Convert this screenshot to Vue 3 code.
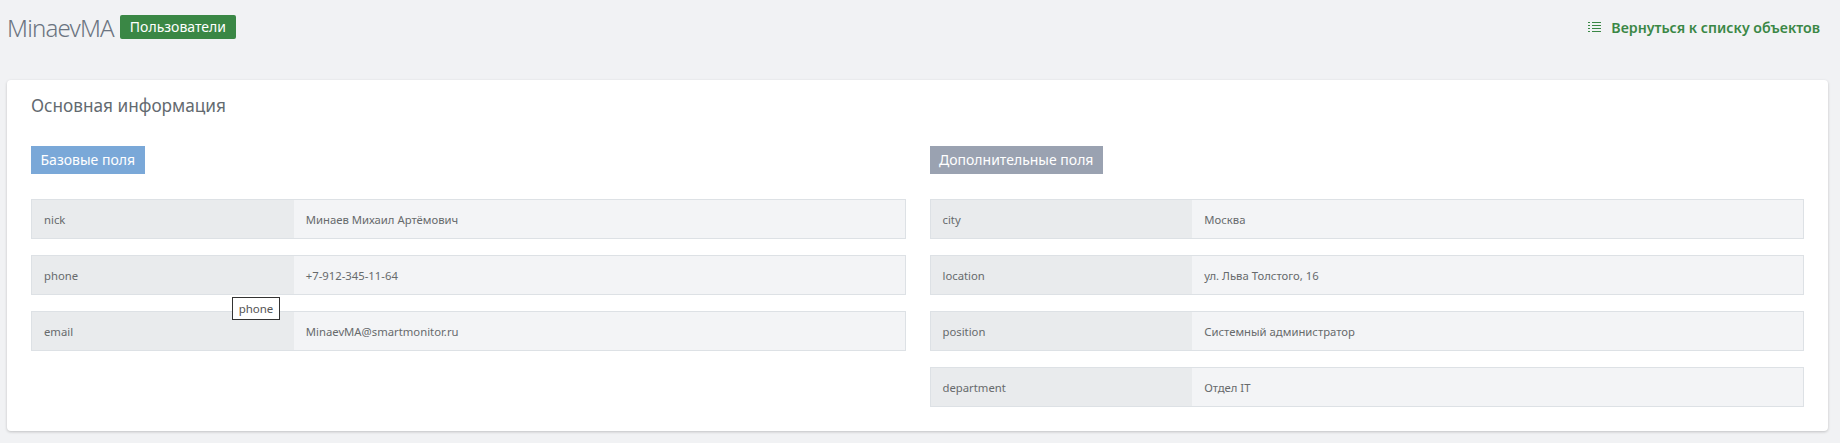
<template>
  <div class="page">
    <header class="top">
      <div class="heading">
        <h1 class="name">MinaevMA</h1>
        <span class="tag">Пользователи</span>
      </div>
      <a class="back">
        <svg class="back-icon" width="13" height="12" viewBox="0 0 13 12">
          <path d="M0 1.5h2M0 4.5h2M0 7.5h2M0 10.5h2" stroke="#3a8745" stroke-width="1" fill="none" />
          <path d="M4 1.5h9M4 4.5h9M4 7.5h9M4 10.5h9" stroke="#3a8745" stroke-width="1" fill="none" />
        </svg>
        Вернуться к списку объектов
      </a>
    </header>

    <section class="card">
      <h2 class="card-title">Основная информация</h2>
      <div class="columns">
        <div v-for="col in columns" :key="col.title" class="column">
          <div class="col-title" :class="col.cls">{{ col.title }}</div>
          <div class="rows">
            <div v-for="row in col.rows" :key="row[0]" class="row">
              <div class="label">{{ row[0] }}</div>
              <div class="value">{{ row[1] }}</div>
              <div v-if="row[0] === 'email'" class="tooltip">phone</div>
            </div>
          </div>
        </div>
      </div>
    </section>
  </div>
</template>

<script setup>
const columns = [
  {
    title: 'Базовые поля',
    cls: 'blue',
    rows: [
      ['nick', 'Минаев Михаил Артёмович'],
      ['phone', '+7-912-345-11-64'],
      ['email', 'MinaevMA@smartmonitor.ru']
    ]
  },
  {
    title: 'Дополнительные поля',
    cls: 'grey',
    rows: [
      ['city', 'Москва'],
      ['location', 'ул. Льва Толстого, 16'],
      ['position', 'Системный администратор'],
      ['department', 'Отдел IT']
    ]
  }
]
</script>

<style>
html, body {
  margin: 0;
  background: #f1f2f4;
}
</style>

<style scoped>
.page {
  height: 443px;
  overflow: hidden;
  padding: 15px 12px 0 7px;
  box-sizing: border-box;
  font-family: "Noto Sans", "Open Sans", sans-serif;
  color: #676a6c;
}

.top {
  display: flex;
  justify-content: space-between;
  align-items: center;
  height: 24px;
  margin-bottom: 41px;
  padding-right: 8px;
}

.heading {
  display: flex;
  align-items: center;
  gap: 6px;
}

.name {
  margin: 0;
  font-size: 24px;
  font-weight: 300;
  letter-spacing: -0.8px;
  color: #6b7480;
}

.tag {
  background: #3a8745;
  color: #fff;
  font-size: 14px;
  line-height: 24px;
  padding: 0 10px;
  border-radius: 2px;
}

.back {
  display: flex;
  align-items: center;
  gap: 10px;
  font-size: 14.2px;
  font-weight: 600;
  color: #3a8745;
}

.card {
  background: #fff;
  border-radius: 4px;
  box-shadow: 0 1px 3px rgba(0, 0, 0, 0.2);
  height: 351px;
  padding: 14px 24px 0;
  box-sizing: border-box;
}

.card-title {
  margin: 0 0 28px;
  font-size: 17.2px;
  font-weight: 400;
  line-height: 24px;
  color: #636a70;
}

.columns {
  display: flex;
  gap: 24px;
}

.column {
  flex: 1;
}

.col-title {
  display: inline-block;
  color: #fff;
  font-size: 14px;
  line-height: 28px;
  padding: 0 9.5px;
}

.blue {
  background: #7aa8d8;
}

.grey {
  background: #9aa2b1;
}

.rows {
  margin-top: 25px;
  display: flex;
  flex-direction: column;
  gap: 16px;
}

.row {
  position: relative;
  display: flex;
  height: 40px;
  box-sizing: border-box;
  border: 1px solid #dde1e5;
  background: #f3f4f6;
  font-size: 11.3px;
  line-height: 40px;
}

.label {
  width: 30%;
  padding-left: 12px;
  box-sizing: border-box;
  background: #e9ebed;
}

.value {
  flex: 1;
  padding-left: 12px;
}

.tooltip {
  position: absolute;
  left: 200px;
  top: -15px;
  width: 48px;
  height: 23px;
  box-sizing: border-box;
  border: 1px solid #333;
  background: #fff;
  font-size: 11.5px;
  line-height: 21px;
  text-align: center;
  color: #555;
}
</style>
